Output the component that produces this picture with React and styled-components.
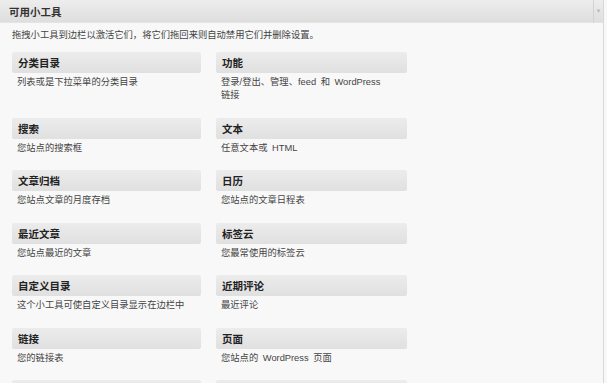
import React from 'react';
import styled, { createGlobalStyle } from 'styled-components';

const GlobalStyle = createGlobalStyle`
  html, body {
    margin: 0;
    padding: 0;
    background: #f8f8f8;
  }
  body {
    font-family: "Liberation Sans", "Noto Sans CJK SC", sans-serif;
    color: #333;
  }
`;

const widgets = [
  { title: '分类目录', desc: '列表或是下拉菜单的分类目录' },
  { title: '功能', desc: '登录/登出、管理、feed 和 WordPress\n链接' },
  { title: '搜索', desc: '您站点的搜索框' },
  { title: '文本', desc: '任意文本或 HTML' },
  { title: '文章归档', desc: '您站点文章的月度存档' },
  { title: '日历', desc: '您站点的文章日程表' },
  { title: '最近文章', desc: '您站点最近的文章' },
  { title: '标签云', desc: '您最常使用的标签云' },
  { title: '自定义目录', desc: '这个小工具可使自定义目录显示在边栏中' },
  { title: '近期评论', desc: '最近评论' },
  { title: '链接', desc: '您的链接表' },
  { title: '页面', desc: '您站点的 WordPress 页面' },
];

const Panel = styled.div`
  width: 603px;
  height: 383px;
  border-right: 1px solid #d8d8d8;
  overflow: hidden;
  background: #f8f8f8;
`;

const Header = styled.div`
  display: flex;
  align-items: center;
  justify-content: space-between;
  height: 23px;
  padding-left: 9px;
  background: linear-gradient(#ededed, #dedede);
  border-bottom: 1px solid #e4e4e4;
  box-sizing: border-box;
`;

const HeaderTitle = styled.h3`
  margin: 0;
  font-size: 10.5px;
  font-weight: bold;
  color: #333;
`;

const Toggle = styled.div`
  display: flex;
  align-items: center;
  justify-content: center;
  width: 9px;
  height: 23px;
  border-left: 1px solid #d2d2d2;
  color: #bbb;
  font-size: 6px;
`;

const Intro = styled.p`
  margin: 0;
  padding: 6px 0 0 12px;
  font-size: 9.3px;
  line-height: 13px;
  color: #444;
`;

const Grid = styled.div`
  display: grid;
  grid-template-columns: 189px 191px;
  column-gap: 15px;
  row-gap: 15.5px;
  padding: 10px 0 0 12px;
  align-items: start;
`;

const Widget = styled.div`
  display: flex;
  flex-direction: column;
`;

const WidgetBar = styled.div`
  display: flex;
  align-items: center;
  height: 21px;
  padding-left: 6px;
  background: linear-gradient(#ececec, #e0e0e0);
  border-radius: 2px;
  font-size: 10.5px;
  font-weight: bold;
  color: #222;
`;

const WidgetDesc = styled.div`
  margin-top: 3px;
  padding-left: 5px;
  font-size: 9.3px;
  line-height: 13px;
  color: #444;
  white-space: pre-line;
  word-spacing: 2px;
`;

export default function App() {
  return (
    <>
      <GlobalStyle />
      <Panel>
        <Header>
          <HeaderTitle>可用小工具</HeaderTitle>
          <Toggle>▼</Toggle>
        </Header>
        <Intro>拖拽小工具到边栏以激活它们，将它们拖回来则自动禁用它们并删除设置。</Intro>
        <Grid>
          {widgets.map(w => (
            <Widget key={w.title}>
              <WidgetBar>{w.title}</WidgetBar>
              <WidgetDesc>{w.desc}</WidgetDesc>
            </Widget>
          ))}
          <Widget>
            <WidgetBar />
          </Widget>
          <Widget>
            <WidgetBar />
          </Widget>
        </Grid>
      </Panel>
    </>
  );
}
